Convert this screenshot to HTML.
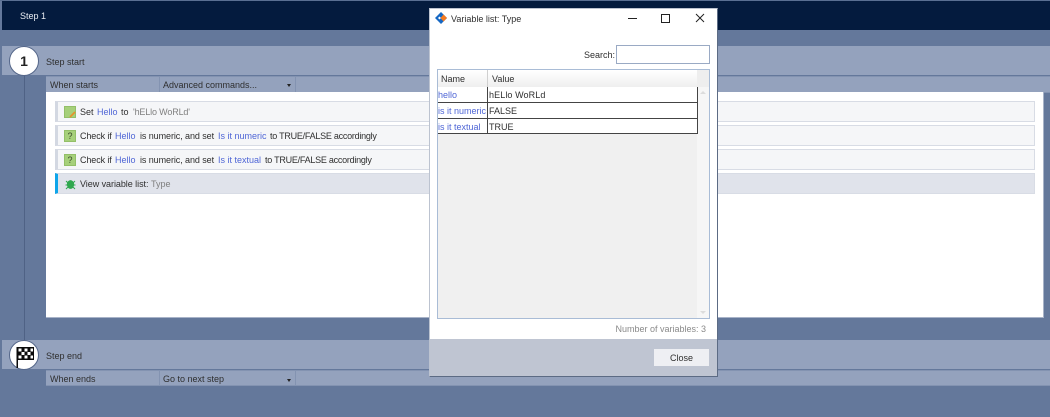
<!DOCTYPE html>
<html><head><meta charset="utf-8">
<style>
html,body{margin:0;padding:0;width:1050px;height:417px;overflow:hidden;background:#64789b;}
body{position:relative;font-family:"Liberation Sans",sans-serif;font-size:9px;color:#2f2f2f;}
#w{position:absolute;left:0;top:0;width:1050px;height:417px;filter:blur(.3px);}
.a{position:absolute;box-sizing:border-box;}
.t{position:absolute;white-space:nowrap;line-height:12px;}
.b{color:#4f66d6;}
.g{color:#7f7f7f;}
.row{position:absolute;left:55px;width:980px;height:21px;background:#f5f6f8;border:1px solid #d8dce5;border-left:3px solid #d3d8e2;box-sizing:border-box;}
.ic{position:absolute;left:64px;width:12px;height:12px;background:#a6d07a;border:1px solid #93bf68;box-sizing:border-box;color:#3a4a2a;font-size:9px;line-height:10px;text-align:center;}
</style></head><body><div id="w">
<div class="a" style="left:0;top:0;width:1050px;height:1px;background:#5a6f92"></div>
<div class="a" style="left:2px;top:1px;width:1048px;height:29px;background:#041b3e"></div>
<div class="t" style="left:20px;top:10px;color:#e8ecf2">Step 1</div>
<div class="a" style="left:2px;top:46px;width:1048px;height:29px;background:#94a2bd"></div>
<div class="a" style="left:24px;top:75px;width:1px;height:265px;background:#4f6285"></div>
<div class="a" style="left:46px;top:76px;width:1004px;height:17px;background:#94a2bd;border-top:1px solid #8393b1;border-bottom:1px solid #8393b1"></div>
<div class="a" style="left:159px;top:76px;width:1px;height:17px;background:#8393b1"></div>
<div class="a" style="left:295px;top:76px;width:1px;height:17px;background:#8393b1"></div>
<div class="t" style="left:50px;top:79px">When starts</div>
<div class="t" style="left:163px;top:79px">Advanced commands...</div>
<div class="a" style="left:287px;top:84px;width:0;height:0;border:2.5px solid transparent;border-top:3px solid #222;border-bottom:0"></div>
<div class="a" style="left:9px;top:46px;width:30px;height:30px;border-radius:50%;background:#fff;border:1px solid #55678a"></div>
<div class="t" style="left:19px;top:54px;font-size:14px;line-height:15px;font-weight:bold;color:#222;width:10px;text-align:center">1</div>
<div class="t" style="left:46px;top:56px">Step start</div>
<div class="a" style="left:46px;top:92px;width:998px;height:226px;background:#fff;border-right:1px solid #a8b3c8;border-bottom:1px solid #a8b3c8"></div>

<div class="row" style="top:101px"></div>
<div class="row" style="top:125px"></div>
<div class="row" style="top:149px"></div>
<div class="row" style="top:173px;background:#e0e3eb;border-left:3px solid #0ea5ea"></div>
<div class="ic" style="top:106px"></div>
<svg class="a" style="left:69px;top:111px" width="7" height="7" viewBox="0 0 7 7"><path d="M1 6L6 1" stroke="#e8902a" stroke-width="1.6"/></svg>
<div class="ic" style="top:130px">?</div>
<div class="ic" style="top:154px">?</div>
<svg class="a" style="left:65px;top:178px" width="11" height="12" viewBox="0 0 11 12"><ellipse cx="5.5" cy="6.5" rx="3.6" ry="4.4" fill="#2fa84f"/><path d="M1 3l2 2M10 3L8 5M0.5 7H3M10.5 7H8M1 11l2-2M10 11L8 9" stroke="#2fa84f" stroke-width="1"/></svg>

<div class="t" style="left:80px;top:106px">Set</div>
<div class="t b" style="left:97px;top:106px">Hello</div>
<div class="t" style="left:121px;top:106px">to</div>
<div class="t g" style="left:133px;top:106px;letter-spacing:-.15px">'hELlo WoRLd'</div>

<div class="t" style="left:80px;top:130px;letter-spacing:-.1px">Check if</div>
<div class="t b" style="left:115px;top:130px">Hello</div>
<div class="t" style="left:140px;top:130px;letter-spacing:-.08px">is numeric, and set</div>
<div class="t b" style="left:218px;top:130px">Is it numeric</div>
<div class="t" style="left:270px;top:130px;letter-spacing:-.25px">to TRUE/FALSE accordingly</div>

<div class="t" style="left:80px;top:154px;letter-spacing:-.1px">Check if</div>
<div class="t b" style="left:115px;top:154px">Hello</div>
<div class="t" style="left:140px;top:154px;letter-spacing:-.08px">is numeric, and set</div>
<div class="t b" style="left:218px;top:154px">Is it textual</div>
<div class="t" style="left:265px;top:154px;letter-spacing:-.25px">to TRUE/FALSE accordingly</div>

<div class="t" style="left:80px;top:178px;letter-spacing:-.05px">View variable list:</div>
<div class="t g" style="left:151px;top:178px">Type</div>

<div class="a" style="left:2px;top:340px;width:1048px;height:29px;background:#94a2bd"></div>
<div class="a" style="left:46px;top:370px;width:1004px;height:16px;background:#94a2bd;border-top:1px solid #8393b1;border-bottom:1px solid #8393b1"></div>
<div class="a" style="left:159px;top:370px;width:1px;height:16px;background:#8393b1"></div>
<div class="a" style="left:295px;top:370px;width:1px;height:16px;background:#8393b1"></div>
<div class="t" style="left:50px;top:373px">When ends</div>
<div class="t" style="left:163px;top:373px">Go to next step</div>
<div class="a" style="left:287px;top:379px;width:0;height:0;border:2.5px solid transparent;border-top:3px solid #222;border-bottom:0"></div>
<div class="a" style="left:9px;top:340px;width:30px;height:30px;border-radius:50%;background:#fff;border:1px solid #55678a"></div>
<svg class="a" style="left:15px;top:346px" width="20" height="22" viewBox="0 0 20 22"><path d="M1.5 1H19V14H3V22H1.5Z" fill="#0a0a0a"/><path d="M3.5 2.5h3v3h-3zM9.5 2.5h3v3h-3zM15.5 2.5h2.5v3h-2.5zM6.5 6h3v3h-3zM12.5 6h3v3h-3zM3.5 9.5h3v3h-3zM9.5 9.5h3v3h-3zM15.5 9.5h2.5v3h-2.5z" fill="#fff"/></svg>
<div class="t" style="left:46px;top:350px">Step end</div>

<div class="a" style="left:429px;top:8px;width:289px;height:369px;background:#fff;border:1px solid #bcc3d0;border-right:1px solid #5c6b84;border-bottom:1px solid #5c6b84"></div>
<svg class="a" style="left:435px;top:12px" width="13" height="12" viewBox="0 0 13 12"><path d="M6 0L12 6L6 12L0 6Z" fill="#1668c4"/><path d="M4.5 4.5L6 6L4.5 7.5L3 6Z" fill="#fff"/><path d="M8.5 2.5L12 6L8.5 9.5L5.5 6Z" fill="#f47a20"/></svg>
<div class="t" style="left:451px;top:13px">Variable list: Type</div>
<div class="a" style="left:628px;top:18px;width:9px;height:1px;background:#222"></div>
<div class="a" style="left:661px;top:14px;width:9px;height:9px;border:1px solid #222"></div>
<svg class="a" style="left:695px;top:13px" width="10" height="10" viewBox="0 0 10 10"><path d="M1 1L9 9M9 1L1 9" stroke="#222" stroke-width="1"/></svg>
<div class="t" style="left:584px;top:49px">Search:</div>
<div class="a" style="left:616px;top:45px;width:94px;height:19px;background:#fff;border:1px solid #9aaac4"></div>
<div class="a" style="left:437px;top:69px;width:273px;height:250px;background:#f6f6f6;border:1px solid #a9bcd6"></div>
<div class="a" style="left:438px;top:70px;width:259px;height:17px;background:linear-gradient(#fff,#eeeeee)"></div>
<div class="a" style="left:697px;top:70px;width:12px;height:17px;background:#eeeeee"></div>
<div class="a" style="left:487px;top:70px;width:1px;height:17px;background:#d0d0d0"></div>
<div class="t" style="left:441px;top:73px">Name</div>
<div class="t" style="left:492px;top:73px">Value</div>
<div class="a" style="left:438px;top:87px;width:260px;height:47px;background:#fff"></div>
<div class="a" style="left:438px;top:134px;width:259px;height:184px;background:#f0f0f0"></div>
<div class="a" style="left:438px;top:87px;width:260px;height:47px;border-right:1px solid #444;border-bottom:1px solid #444"></div>
<div class="a" style="left:438px;top:102px;width:260px;height:1px;background:#444"></div>
<div class="a" style="left:438px;top:118px;width:260px;height:1px;background:#444"></div>
<div class="a" style="left:487px;top:87px;width:1px;height:47px;background:#444"></div>
<div class="t b" style="left:438px;top:89px">hello</div>
<div class="t" style="left:489px;top:89px;letter-spacing:.1px">hELlo WoRLd</div>
<div class="t b" style="left:438px;top:105px;width:49px;overflow:hidden">is it numeric</div>
<div class="t" style="left:489px;top:105px">FALSE</div>
<div class="t b" style="left:438px;top:121px">is it textual</div>
<div class="t" style="left:489px;top:121px">TRUE</div>
<div class="a" style="left:700px;top:91px;width:0;height:0;border:3px solid transparent;border-bottom:3px solid #dcdcdc;border-top:0"></div>
<div class="a" style="left:700px;top:311px;width:0;height:0;border:3px solid transparent;border-top:3px solid #dcdcdc;border-bottom:0"></div>
<div class="t" style="right:344px;top:323px;color:#8a8a8a">Number of variables: 3</div>
<div class="a" style="left:430px;top:339px;width:287px;height:37px;background:#bfc5d2"></div>
<div class="a" style="left:654px;top:349px;width:55px;height:17px;background:#eeeff3"></div>
<div class="t" style="left:654px;top:352px;width:55px;text-align:center">Close</div>
</div></body></html>
